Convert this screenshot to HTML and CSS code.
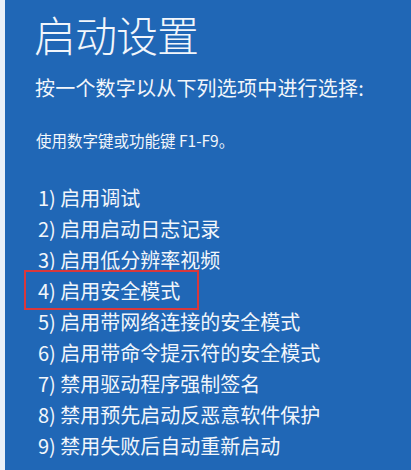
FILE: index.html
```html
<!DOCTYPE html>
<html lang="zh-CN">
<head>
<meta charset="utf-8">
<link rel="stylesheet" href="styles.css">
</head>
<body>
<div class="screen">
  <h1 class="title">启动设置</h1>
  <p class="prompt">按一个数字以从下列选项中进行选择:</p>
  <p class="hint">使用数字键或功能键 F1-F9。</p>
  <ol class="options">
    <li>1) 启用调试</li>
    <li>2) 启用启动日志记录</li>
    <li>3) 启用低分辨率视频</li>
    <li class="marked">4) 启用安全模式</li>
    <li>5) 启用带网络连接的安全模式</li>
    <li>6) 启用带命令提示符的安全模式</li>
    <li>7) 禁用驱动程序强制签名</li>
    <li>8) 禁用预先启动反恶意软件保护</li>
    <li>9) 禁用失败后自动重新启动</li>
  </ol>
</div>
</body>
</html>
```
FILE: styles.css
```css
html, body {
  margin: 0;
  padding: 0;
  background: #e9f0f8;
}
body {
  width: 411px;
  height: 470px;
  overflow: hidden;
  font-family: "Noto Sans CJK SC", "Noto Sans", sans-serif;
  color: #f2f6fb;
}
.screen {
  margin-left: 5px;
  height: 470px;
  background: #2067b6;
  padding: 10px 0 0 29px;
  box-sizing: border-box;
}
.title {
  margin: 0;
  font-size: 42px;
  font-weight: 300;
  line-height: 48px;
  letter-spacing: -1px;
}
.prompt {
  margin: 16px 0 0 1px;
  font-size: 20px;
  font-weight: 400;
  line-height: 28px;
  letter-spacing: 0.2px;
}
.hint {
  margin: 28px 0 0 2px;
  font-size: 15.5px;
  line-height: 20px;
}
.options {
  list-style: none;
  margin: 32px 0 0 4px;
  padding: 0;
  font-size: 20px;
  line-height: 31px;
}
.options li {
  position: relative;
}
.marked::after {
  content: "";
  position: absolute;
  left: -14px;
  top: -5px;
  width: 175px;
  height: 40px;
  border: 2px solid #d9383c;
  box-sizing: border-box;
}
```
